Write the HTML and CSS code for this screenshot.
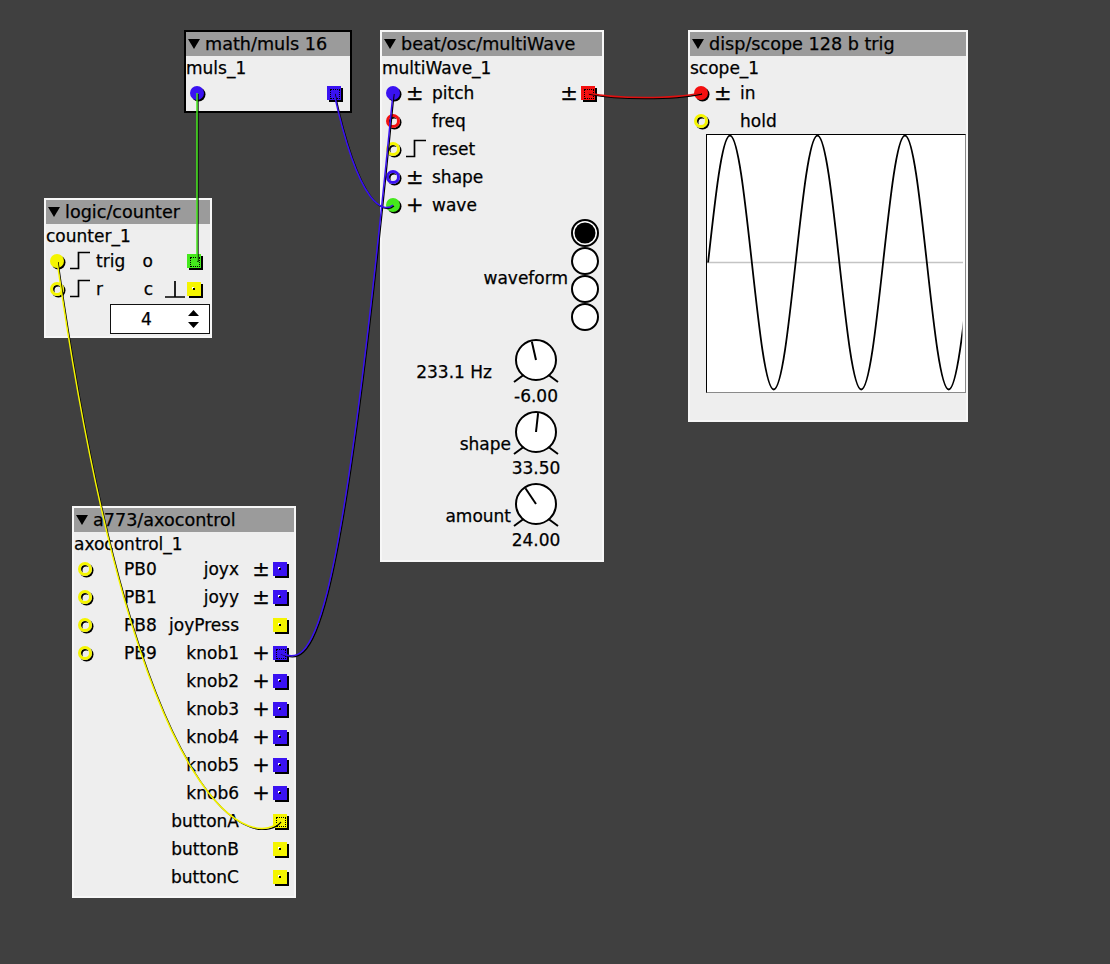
FILE: index.html
```html
<!DOCTYPE html>
<html>
<head>
<meta charset="utf-8">
<title>Patch</title>
<link rel="stylesheet" href="styles.css">
</head>
<body>
<div class="canvas">

  <!-- math/muls 16 -->
  <div class="module sel m-muls">
    <div class="hdr"><svg class="tri" viewBox="0 0 12 10"><polygon points="0,0 12,0 6,10"/></svg><span>math/muls 16</span></div>
    <div class="iname">muls_1</div>
    <div class="row">
      <span class="jin fill blue"></span>
      <div class="outs narrow"><span class="jout blue conn"></span></div>
    </div>
  </div>

  <!-- logic/counter -->
  <div class="module m-counter">
    <div class="hdr"><svg class="tri" viewBox="0 0 12 10"><polygon points="0,0 12,0 6,10"/></svg><span>logic/counter</span></div>
    <div class="iname">counter_1</div>
    <div class="row">
      <span class="jin fill yellow"></span>
      <span class="isym"><svg class="step" viewBox="0 0 20 20"><path d="M0,17.5 H8.5 V1.5 H20"/></svg></span>
      <span class="ilabel">trig</span>
      <div class="outs narrow">
        <span class="olabel">o</span><span class="osym"></span><span class="jout green conn"></span>
      </div>
    </div>
    <div class="row">
      <span class="jin ring yellow"></span>
      <span class="isym"><svg class="step" viewBox="0 0 20 20"><path d="M0,17.5 H8.5 V1.5 H20"/></svg></span>
      <span class="ilabel">r</span>
      <div class="outs narrow">
        <span class="olabel">c</span><span class="osym"><svg class="step" viewBox="0 0 20 20"><path d="M0,18 H20 M10,18 V2"/></svg></span><span class="jout yellow"></span>
      </div>
    </div>
    <div class="spin">
      <span class="num">4</span>
      <svg class="arrows" viewBox="0 0 11 28"><polygon points="0,11 11,11 5.5,5"/><polygon points="0,17 11,17 5.5,23"/></svg>
    </div>
  </div>

  <!-- beat/osc/multiWave -->
  <div class="module m-wave">
    <div class="hdr"><svg class="tri" viewBox="0 0 12 10"><polygon points="0,0 12,0 6,10"/></svg><span>beat/osc/multiWave</span></div>
    <div class="iname">multiWave_1</div>
    <div class="row">
      <span class="jin fill blue"></span>
      <span class="isym">±</span>
      <span class="ilabel">pitch</span>
      <div class="outs">
        <span class="osym">±</span><span class="jout red conn"></span>
      </div>
    </div>
    <div class="row">
      <span class="jin ring red"></span>
      <span class="isym"></span>
      <span class="ilabel">freq</span>
    </div>
    <div class="row">
      <span class="jin ring yellow"></span>
      <span class="isym"><svg class="step" viewBox="0 0 20 20"><path d="M0,17.5 H8.5 V1.5 H20"/></svg></span>
      <span class="ilabel">reset</span>
    </div>
    <div class="row">
      <span class="jin ring blue"></span>
      <span class="isym">±</span>
      <span class="ilabel">shape</span>
    </div>
    <div class="row">
      <span class="jin fill green"></span>
      <span class="isym">+</span>
      <span class="ilabel">wave</span>
    </div>

    <div class="radio-row">
      <span class="radio-label">waveform</span>
      <div class="radios">
        <svg class="radio" viewBox="0 0 28 28"><circle cx="14" cy="14" r="13" class="rb"/><circle cx="14" cy="14" r="10.5" class="rdot"/></svg>
        <svg class="radio" viewBox="0 0 28 28"><circle cx="14" cy="14" r="13" class="rb"/></svg>
        <svg class="radio" viewBox="0 0 28 28"><circle cx="14" cy="14" r="13" class="rb"/></svg>
        <svg class="radio" viewBox="0 0 28 28"><circle cx="14" cy="14" r="13" class="rb"/></svg>
      </div>
    </div>

    <div class="knobs">
      <div class="krow">
        <span class="klabel hz">233.1 Hz</span>
        <div class="kblock">
          <svg class="knob" viewBox="0 0 48 48"><circle cx="24" cy="24" r="20"/><path d="M11.5,39 L2,46 M36.5,39 L46,46"/><path d="M24,24 L19.8,5.5"/></svg>
          <div class="kval"><span>-6.00</span></div>
        </div>
      </div>
      <div class="krow">
        <span class="klabel">shape</span>
        <div class="kblock">
          <svg class="knob" viewBox="0 0 48 48"><circle cx="24" cy="24" r="20"/><path d="M11.5,39 L2,46 M36.5,39 L46,46"/><path d="M24,24 L26.1,5.1"/></svg>
          <div class="kval"><span>33.50</span></div>
        </div>
      </div>
      <div class="krow">
        <span class="klabel">amount</span>
        <div class="kblock">
          <svg class="knob" viewBox="0 0 48 48"><circle cx="24" cy="24" r="20"/><path d="M11.5,39 L2,46 M36.5,39 L46,46"/><path d="M24,24 L13.4,8.2"/></svg>
          <div class="kval"><span>24.00</span></div>
        </div>
      </div>
    </div>
  </div>

  <!-- disp/scope -->
  <div class="module m-scope">
    <div class="hdr"><svg class="tri" viewBox="0 0 12 10"><polygon points="0,0 12,0 6,10"/></svg><span>disp/scope 128 b trig</span></div>
    <div class="iname">scope_1</div>
    <div class="row">
      <span class="jin fill red"></span>
      <span class="isym">±</span>
      <span class="ilabel">in</span>
    </div>
    <div class="row">
      <span class="jin ring yellow"></span>
      <span class="isym"></span>
      <span class="ilabel">hold</span>
    </div>
    <div class="scope-disp">
      <svg class="wave" viewBox="0 0 258 257">
        <defs><clipPath id="sclip"><rect x="0" y="0" width="255.5" height="257"/></clipPath></defs>
        <line x1="0" y1="127.5" x2="256" y2="127.5" class="zero"/>
        <path clip-path="url(#sclip)" class="sine" d="M1.1,127.5 C8.234,62.44 15.058,0.5 22.975,0.5 C30.892,0.5 37.716,62.44 44.85,127.5 C51.984,192.56 58.808,254.5 66.725,254.5 C74.642,254.5 81.466,192.56 88.6,127.5 C95.734,62.44 102.558,0.5 110.475,0.5 C118.392,0.5 125.216,62.44 132.35,127.5 C139.484,192.56 146.308,254.5 154.225,254.5 C162.142,254.5 168.966,192.56 176.1,127.5 C183.234,62.44 190.058,0.5 197.975,0.5 C205.892,0.5 212.716,62.44 219.85,127.5 C226.984,192.56 233.808,254.5 241.725,254.5 C249.642,254.5 256.466,192.56 263.6,127.5"/>
      </svg>
    </div>
  </div>

  <!-- a773/axocontrol -->
  <div class="module m-axo">
    <div class="hdr"><svg class="tri" viewBox="0 0 12 10"><polygon points="0,0 12,0 6,10"/></svg><span>a773/axocontrol</span></div>
    <div class="iname">axocontrol_1</div>
    <div class="row">
      <span class="jin ring yellow"></span><span class="isym"></span><span class="ilabel">PB0</span>
      <div class="outs"><span class="olabel">joyx</span><span class="osym">±</span><span class="jout blue"></span></div>
    </div>
    <div class="row">
      <span class="jin ring yellow"></span><span class="isym"></span><span class="ilabel">PB1</span>
      <div class="outs"><span class="olabel">joyy</span><span class="osym">±</span><span class="jout blue"></span></div>
    </div>
    <div class="row">
      <span class="jin ring yellow"></span><span class="isym"></span><span class="ilabel">PB8</span>
      <div class="outs"><span class="olabel">joyPress</span><span class="osym"></span><span class="jout yellow"></span></div>
    </div>
    <div class="row">
      <span class="jin ring yellow"></span><span class="isym"></span><span class="ilabel">PB9</span>
      <div class="outs"><span class="olabel">knob1</span><span class="osym">+</span><span class="jout blue conn"></span></div>
    </div>
    <div class="row">
      <div class="outs"><span class="olabel">knob2</span><span class="osym">+</span><span class="jout blue"></span></div>
    </div>
    <div class="row">
      <div class="outs"><span class="olabel">knob3</span><span class="osym">+</span><span class="jout blue"></span></div>
    </div>
    <div class="row">
      <div class="outs"><span class="olabel">knob4</span><span class="osym">+</span><span class="jout blue"></span></div>
    </div>
    <div class="row">
      <div class="outs"><span class="olabel">knob5</span><span class="osym">+</span><span class="jout blue"></span></div>
    </div>
    <div class="row">
      <div class="outs"><span class="olabel">knob6</span><span class="osym">+</span><span class="jout blue"></span></div>
    </div>
    <div class="row">
      <div class="outs"><span class="olabel">buttonA</span><span class="osym"></span><span class="jout yellow conn"></span></div>
    </div>
    <div class="row">
      <div class="outs"><span class="olabel">buttonB</span><span class="osym"></span><span class="jout yellow"></span></div>
    </div>
    <div class="row">
      <div class="outs"><span class="olabel">buttonC</span><span class="osym"></span><span class="jout yellow"></span></div>
    </div>
  </div>

  <!-- wires -->
  <svg class="wires" viewBox="0 0 1110 964">
    <g class="shadow" transform="translate(1,1)">
      <path d="M197,93 L197,261"/>
      <path d="M588,93 C617,99 673,99 701,93"/>
      <path d="M334,93 C360,212 385,212 393,205"/>
      <path d="M280,653 C310,665 338,665 393,93"/>
      <path d="M57,261 C140,845 260,845 280,821"/>
    </g>
    <path class="w-green" d="M197,93 L197,261"/>
    <path class="w-red" d="M588,93 C617,99 673,99 701,93"/>
    <path class="w-blue" d="M334,93 C360,212 385,212 393,205"/>
    <path class="w-blue" d="M280,653 C310,665 338,665 393,93"/>
    <path class="w-yellow" d="M57,261 C140,845 260,845 280,821"/>
  </svg>

</div>
</body>
</html>
```

FILE: styles.css
```css
* { box-sizing: border-box; }
html, body { margin: 0; padding: 0; }
body {
  background: #404040;
  font-family: "DejaVu Sans", "Liberation Sans", sans-serif;
  font-size: 17px;
  color: #000;
}
.canvas {
  position: relative;
  width: 1110px;
  height: 964px;
  overflow: hidden;
  background: #404040;
  -webkit-text-stroke: 0.25px #000;
}

/* modules on the free patch canvas */
.module {
  position: absolute;
  background: #eeeeee;
  border: 2px solid #f7f7f7;
  display: flex;
  flex-direction: column;
}
.module.sel { border-color: #000; }
.m-muls    { left: 184px; top: 30px;  width: 168px; height: 83px; }
.m-counter { left: 44px;  top: 198px; width: 168px; height: 140px; }
.m-wave    { left: 380px; top: 30px;  width: 224px; height: 532px; }
.m-scope   { left: 688px; top: 30px;  width: 280px; height: 392px; }
.m-axo     { left: 72px;  top: 506px; width: 224px; height: 392px; }

.hdr {
  height: 24px;
  flex: none;
  background: #9b9b9b;
  display: flex;
  align-items: center;
  line-height: 24px;
  font-size: 17.6px;
  white-space: nowrap;
}
.tri {
  width: 12px;
  height: 10px;
  margin-left: 2px;
  margin-right: 5px;
  fill: #000;
  flex: none;
}
.iname {
  height: 23px;
  line-height: 24px;
  flex: none;
  white-space: nowrap;
}

.row {
  height: 28px;
  flex: none;
  display: flex;
  align-items: center;
  white-space: nowrap;
  line-height: 30px;
}

/* inlets */
.jin {
  width: 14px;
  height: 14px;
  margin-left: 4px;
  border-radius: 50%;
  flex: none;
}
.jin.fill { box-shadow: 1.5px 1.5px 0 #000; }
.jin.ring {
  border: 3px solid;
  background: transparent;
  box-shadow: 1.5px 1.5px 0 #000, inset 1.5px 1.5px 0 #000;
}
.jin.fill.blue { background: #3a12f2; }
.jin.fill.red { background: #f41010; }
.jin.fill.yellow { background: #f5f500; }
.jin.fill.green { background: #44e81c; }
.jin.ring.blue { border-color: #3a12f2; }
.jin.ring.red { border-color: #f41010; }
.jin.ring.yellow { border-color: #f5f500; }

.isym {
  width: 20px;
  height: 20px;
  margin-left: 6px;
  line-height: 20px;
  font-size: 21px;
  flex: none;
  display: flex;
  align-items: center;
}
.ilabel { margin-left: 6px; }

.step {
  width: 20px;
  height: 20px;
  fill: none;
  stroke: #000;
  stroke-width: 1.7;
}

/* outlets */
.outs {
  margin-left: auto;
  display: flex;
  align-items: center;
  margin-right: 7px;
}
.outs.narrow { margin-right: 9px; }
.olabel { white-space: nowrap; }
.osym {
  width: 20px;
  height: 20px;
  margin-left: 12px;
  line-height: 20px;
  font-size: 21px;
  flex: none;
  display: flex;
  align-items: center;
  justify-content: center;
}
.jout {
  position: relative;
  width: 14px;
  height: 14px;
  margin-left: 2px;
  flex: none;
  box-shadow: 2px 2px 0 #000;
}
.jout.blue { background: #3a12f2; }
.jout.red { background: #f41010; }
.jout.yellow { background: #f5f500; }
.jout.green { background: #44e81c; }
.jout::after {
  content: "";
  position: absolute;
  left: 6px;
  top: 6px;
  width: 2px;
  height: 2px;
  background: #000;
  box-shadow: -1px -1px 0 #fff;
}
.jout.conn::after {
  left: 3px;
  top: 3px;
  width: 8px;
  height: 8px;
  background: transparent;
  border: 1px dotted #000;
  box-shadow: none;
}

/* counter spinner */
.spin {
  margin-top: 1px;
  margin-left: auto;
  width: 100px;
  height: 30px;
  background: #fff;
  border: 1px solid #111;
  display: flex;
  align-items: center;
  flex: none;
}
.spin .num {
  flex: 1;
  text-align: center;
  padding-right: 6px;
}
.arrows {
  width: 11px;
  height: 28px;
  margin-right: 10px;
  fill: #000;
  flex: none;
}

/* multiWave radio group */
.radio-row {
  display: flex;
  justify-content: flex-end;
  align-items: center;
  padding-right: 3px;
  flex: none;
}
.radio-label {
  margin-right: 3px;
  padding-top: 6px;
}
.radios {
  display: flex;
  flex-direction: column;
}
.radio {
  width: 28px;
  height: 28px;
  display: block;
}
.rb { fill: #fff; stroke: #000; stroke-width: 2; }
.rdot { fill: #000; }

/* knobs */
.knobs {
  margin-top: 5px;
  display: flex;
  flex-direction: column;
}
.krow {
  height: 72px;
  display: flex;
  justify-content: flex-end;
  padding-right: 42px;
}
.klabel {
  margin-top: 24px;
  line-height: 24px;
  height: 24px;
  margin-right: 1px;
  white-space: nowrap;
}
.klabel.hz { margin-right: 20px; }
.kblock {
  width: 48px;
  display: flex;
  flex-direction: column;
}
.knob {
  width: 48px;
  height: 48px;
  display: block;
  fill: none;
  stroke: #000;
  stroke-width: 2;
}
.knob circle { fill: #fff; }
.kval {
  height: 24px;
  line-height: 24px;
  display: flex;
  justify-content: center;
  white-space: nowrap;
}

/* scope display */
.scope-disp {
  margin-left: 16px;
  margin-top: -1px;
  width: 260px;
  height: 259px;
  background: #fff;
  border-top: 1px solid #000;
  border-left: 1px solid #000;
  border-right: 1px solid #8a8a8a;
  border-bottom: 1px solid #8a8a8a;
  flex: none;
}
.wave {
  width: 258px;
  height: 257px;
  display: block;
}
.zero { stroke: #c4c4c4; stroke-width: 1.6; }
.sine { fill: none; stroke: #000; stroke-width: 1.8; }

/* wires overlay */
.wires {
  position: absolute;
  left: 0;
  top: 0;
  width: 1110px;
  height: 964px;
  pointer-events: none;
}
.wires path { fill: none; stroke-width: 1.5; }
.wires .shadow path { stroke: #000; stroke-width: 1.3; }
.w-green { stroke: #44e81c; }
.w-red { stroke: #e01010; }
.w-blue { stroke: #3a12f2; }
.w-yellow { stroke: #f5f500; }
```
